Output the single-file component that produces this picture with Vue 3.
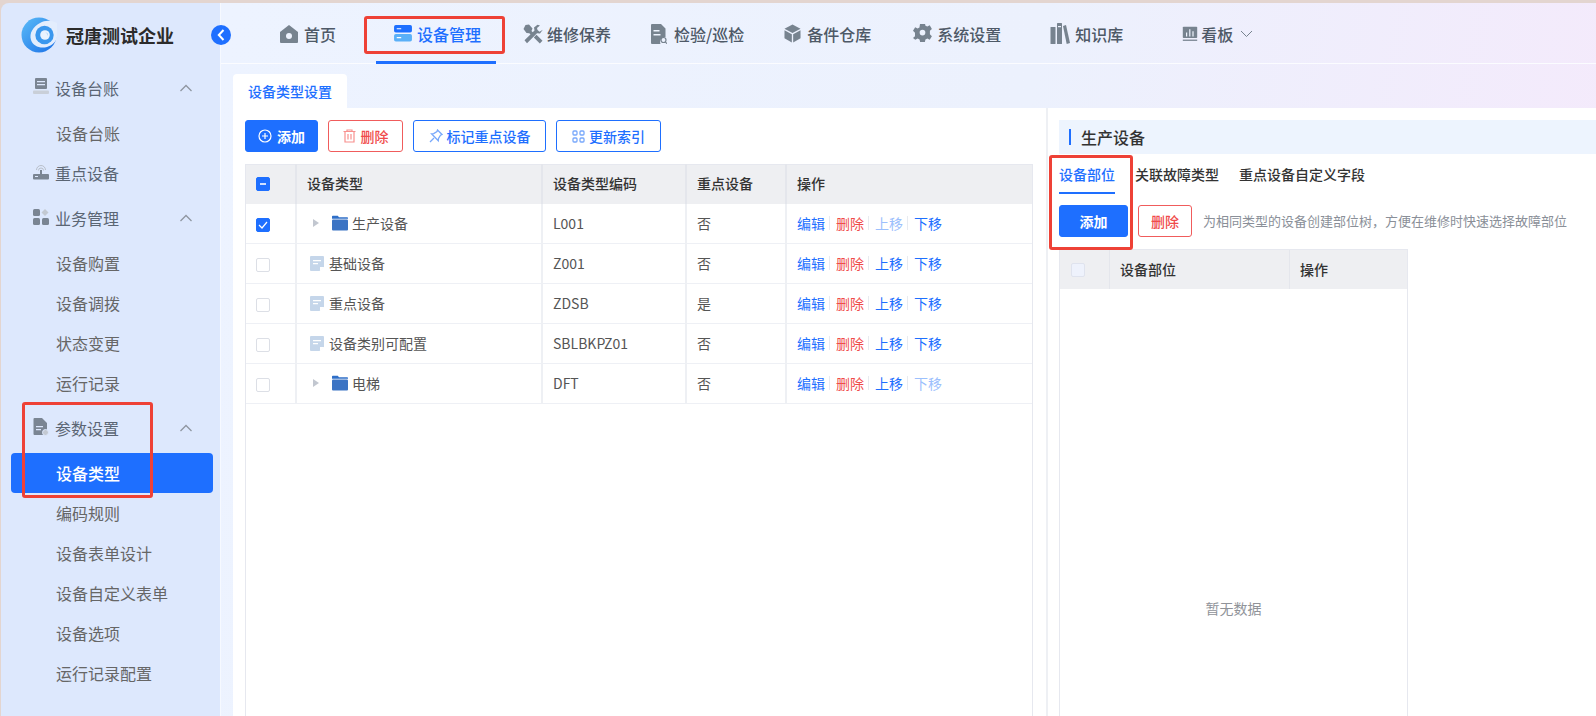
<script setup>
const navItems = [
  { key: 'home', label: '首页', ml: 59, gap: 6, w: 18, h: 18, vb: '1 1.5 18 18' },
  { key: 'server', label: '设备管理', ml: 40, gap: 5, w: 18, h: 17, vb: '0 1 20 19' },
  { key: 'tools', label: '维修保养', ml: 27, gap: 4, w: 20, h: 20, vb: '0 0 20 20' },
  { key: 'doc', label: '检验/巡检', ml: 40, gap: 7, w: 16, h: 20, vb: '0 0 16 20' },
  { key: 'box', label: '备件仓库', ml: 40, gap: 6, w: 17, h: 19, vb: '1 1 18 19' },
  { key: 'gear', label: '系统设置', ml: 42, gap: 5, w: 19, h: 19, vb: '0 0 20 20' },
  { key: 'books', label: '知识库', ml: 49, gap: 5, w: 20, h: 21, vb: '0 0 20 21' },
  { key: 'chart', label: '看板', ml: 59, gap: 3, w: 16, h: 16, vb: '0 0 20 20', chevron: true }
]
navItems[1].active = true
const rows = [
  { name: '生产设备', code: 'L001', key: '否', folder: true, checked: true, upOff: true },
  { name: '基础设备', code: 'Z001', key: '否' },
  { name: '重点设备', code: 'ZDSB', key: '是' },
  { name: '设备类别可配置', code: 'SBLBKPZ01', key: '否' },
  { name: '电梯', code: 'DFT', key: '否', folder: true, downOff: true }
]
</script>

<template>
  <div class="app">
    <div class="strip"></div>
    <div class="body">
      <aside class="side">
        <div class="brand">
          <svg class="logo" width="36" height="36" viewBox="0 0 36 36">
            <defs>
              <linearGradient id="lg" x1="0" y1="0" x2="1" y2="1">
                <stop offset="0" stop-color="#5bbcf8" />
                <stop offset="1" stop-color="#1a6fe6" />
              </linearGradient>
            </defs>
            <circle cx="18" cy="18" r="17.5" fill="url(#lg)" />
            <path d="M36 6 C30 3 24 3 19 6 C12 10 8 16 10 23 C12 29 19 32 26 30 C31 28.500 35 25 36 20 Z" fill="#e3edfd" />
            <circle cx="23.500" cy="18" r="9.200" fill="#3a97ee" />
            <circle cx="24" cy="18" r="4.800" fill="#e9f2fe" />
            <path d="M24 15.500a2.800 2.800 0 0 1 2.500 3.800 2.500 2.500 0 0 0-2.500-3.800z" fill="#5aaef2" />
          </svg>
          <span class="brand-name">冠唐测试企业</span>
        </div>

        <div class="group first">
          <svg class="gicon" width="16" height="18" viewBox="0 0 16 18"><rect x="2" y="0" width="12" height="11" rx="1" fill="#7a8593" /><path d="M4 3h8v1.200H4zM4 6h8v1.200H4z" fill="#dde8fd" /><rect x="0" y="12.500" width="16" height="3.500" rx="1" fill="#c9cfd8" /></svg>
          <span class="gtext">设备台账</span>
          <svg class="chev" width="14" height="8" viewBox="0 0 14 8"><path d="M1.500 7 7 1.500 12.500 7" fill="none" stroke="#8f96a0" stroke-width="1.300" /></svg>
        </div>
        <div class="sub sub-tight">设备台账</div>
        <div class="group plain">
          <svg class="gicon" width="16" height="16" viewBox="0 0 16 16"><path d="M3.500 6a4.500 4.500 0 0 1 9 0M5.500 6.500a2.500 2.500 0 0 1 5 0" fill="none" stroke="#b9c0ca" stroke-width="1" /><rect x="7" y="6" width="2" height="5" fill="#7a8593" /><rect x="0" y="10" width="16" height="5.500" rx="1" fill="#7a8593" /><rect x="2" y="12" width="3" height="1" fill="#dde8fd" /></svg>
          <span class="gtext">重点设备</span>
        </div>
        <div class="group tight">
          <svg class="gicon" width="16" height="16" viewBox="0 0 16 16"><rect x="0" y="0" width="7" height="7" rx="1.500" fill="#7a8593" /><path d="M12 0l3.500 3.500L12 7 8.500 3.500z" fill="#c3c9d2" /><rect x="0" y="9" width="7" height="7" rx="1.500" fill="#7a8593" /><rect x="9" y="9" width="7" height="7" rx="1.500" fill="#7a8593" /></svg>
          <span class="gtext">业务管理</span>
          <svg class="chev" width="14" height="8" viewBox="0 0 14 8"><path d="M1.500 7 7 1.500 12.500 7" fill="none" stroke="#8f96a0" stroke-width="1.300" /></svg>
        </div>
        <div class="sub sub-first">设备购置</div>
        <div class="sub">设备调拨</div>
        <div class="sub">状态变更</div>
        <div class="sub">运行记录</div>
        <div class="group wide">
          <svg class="gicon" width="16" height="18" viewBox="0 0 16 18"><path d="M1.500 0H9l5 5v11a1 1 0 0 1-1 1H1.500a1 1 0 0 1-1-1V1a1 1 0 0 1 1-1z" fill="#7a8593" /><path d="M3 8h7v1.200H3zM3 11h5v1.200H3z" fill="#dde8fd" /><circle cx="12.500" cy="14.500" r="3" fill="#c3c9d2" stroke="#dde8fd" /></svg>
          <span class="gtext">参数设置</span>
          <svg class="chev" width="14" height="8" viewBox="0 0 14 8"><path d="M1.500 7 7 1.500 12.500 7" fill="none" stroke="#8f96a0" stroke-width="1.300" /></svg>
        </div>
        <div class="sub active">设备类型</div>
        <div class="sub">编码规则</div>
        <div class="sub">设备表单设计</div>
        <div class="sub">设备自定义表单</div>
        <div class="sub">设备选项</div>
        <div class="sub">运行记录配置</div>
      </aside>

      <button class="collapse" aria-label="收起">
        <svg width="8" height="12" viewBox="0 0 8 12"><path d="M6.500 1 1.800 6l4.700 5" fill="none" stroke="#fff" stroke-width="2" /></svg>
      </button>

      <main class="main">
        <nav class="topnav">
          <div
            v-for="n in navItems"
            :key="n.key"
            class="nav-item"
            :class="{ on: n.active }"
            :style="{ marginLeft: n.ml + 'px', gap: n.gap + 'px' }"
          >
            <svg :width="n.w" :height="n.h" :viewBox="n.vb" class="nav-ic">
              <template v-if="n.key === 'home'">
                <path d="M10 1.500 19 8.500V18.500a1 1 0 0 1-1 1H2a1 1 0 0 1-1-1V8.500z" fill="#77838f" /><circle cx="10" cy="12.500" r="3" fill="#eef3fe" />
              </template>
              <template v-else-if="n.key === 'server'">
                <rect x="0" y="1" width="20" height="8.500" rx="2" fill="#1e6fff" /><rect x="0" y="11" width="20" height="8.500" rx="2" fill="#5ab0f8" />
                <path d="M3 4.500h5v1.200H3zM3 14.500h5v1.200H3z" fill="#fff" />
              </template>
              <template v-else-if="n.key === 'tools'">
                <path d="M2.500 1 6 0.500 9.500 4.500 8.500 7 12 10.500 9.800 12.700 6.300 9.200 3.500 9 .5 5z" fill="#77838f" />
                <path d="M14.500 .8 11 3.500 11.500 6.500 1.500 16.300 4 19.200 14 9.200 17 9.500 19.800 5.800 16.500 7.800 14.500 6 14 4 17 1.500z" fill="#77838f" />
                <path d="M10.800 13.500 13.500 10.800 19.500 16.800 16.800 19.500z" fill="#77838f" />
              </template>
              <template v-else-if="n.key === 'doc'">
                <path d="M1 0h9l4.500 4.500v8.500a5 5 0 0 0-5 7H1a1 1 0 0 1-1-1V1a1 1 0 0 1 1-1z" fill="#77838f" />
                <path d="M2.500 6h6v1.400h-6zM2.500 10h7v1.400h-7z" fill="#eef3fe" />
                <circle cx="12.500" cy="16" r="2.500" fill="none" stroke="#77838f" stroke-width="1.200" /><path d="M14.300 17.800 16 19.700" stroke="#77838f" stroke-width="1.200" />
              </template>
              <template v-else-if="n.key === 'box'">
                <path d="M10 1 18.500 5.500 10 10 1.500 5.500z" fill="#77838f" /><path d="M1.500 7 9.300 11.200V20L1.500 15.500z" fill="#77838f" /><path d="M18.500 7 10.700 11.200V20L18.500 15.500z" fill="#77838f" />
              </template>
              <template v-else-if="n.key === 'gear'">
                <path fill-rule="evenodd" d="M7.500 0h5l.6 2.800 2 .9 2.500-1.400 2.300 3.900-2.100 2v3.600l2.100 2-2.300 3.900-2.500-1.400-2 .9-.6 2.800h-5l-.6-2.800-2-.9-2.500 1.400L0 15.800l2.100-2v-3.600L0 8.200l2.300-3.900 2.500 1.400 2-.9zM10 7a3 3 0 1 0 0 6 3 3 0 0 0 0-6z" fill="#77838f" transform="translate(0 -1)" />
              </template>
              <template v-else-if="n.key === 'books'">
                <rect x="0.500" y="4" width="5" height="17" rx=".5" fill="#77838f" /><rect x="7" y="0" width="5" height="21" rx=".5" fill="#77838f" /><path d="M13 3 16 2 20 20 16.700 21z" fill="#77838f" /><path d="M8 3h3v1.200H8z" fill="#eef3fe" />
              </template>
              <template v-else-if="n.key === 'chart'">
                <rect x="1" y="1" width="18" height="14" rx="1" fill="#77838f" /><path d="M5 8h1.500v5H5zM9 4h1.500v9H9zM13 6.500h1.500V13H13z" fill="#eef3fe" /><rect x="1" y="17" width="18" height="1.600" fill="#77838f" />
              </template>
            </svg>
            <span class="nav-t">{{ n.label }}</span>
            <svg v-if="n.chevron" class="nav-chev" width="13" height="8" viewBox="0 0 13 8"><path d="M1 1l5.500 5.500L12 1" fill="none" stroke="#77838f" stroke-width="1" /></svg>
          </div>
        </nav>

        <div class="tabs"><div class="tab">设备类型设置</div></div>

        <section class="panel">
          <div class="left">
            <div class="toolbar">
              <button class="btn primary w-add">
                <svg width="14" height="14" viewBox="0 0 14 14"><circle cx="7" cy="7" r="6" fill="none" stroke="#fff" stroke-width="1.200" /><path d="M4 7h6M7 4v6" stroke="#fff" stroke-width="1.200" /></svg>
                添加
              </button>
              <button class="btn danger w-del">
                <svg width="13" height="14" viewBox="0 0 13 14"><path d="M0.500 2.500h12M4 2.500V1h5v1.500M2 2.500V13h9V2.500M5 5v5.500M8 5v5.500" fill="none" stroke="#f8908e" stroke-width="1.200" /></svg>
                删除
              </button>
              <button class="btn ghost w-mark">
                <svg width="14" height="14" viewBox="0 0 14 14"><path d="M8.500 1 13 5.500 11.500 6.200 9.500 9.500 9.300 11.700 2.500 4.800 4.700 4.600 8 2.500zM5 9 1 13" fill="none" stroke="#78a8fb" stroke-width="1.300" /></svg>
                标记重点设备
              </button>
              <button class="btn ghost w-upd">
                <svg width="13" height="13" viewBox="0 0 13 13"><g fill="none" stroke="#78a8fb" stroke-width="1.300"><rect x="1" y="1" width="4" height="4" rx="1" /><rect x="8" y="1" width="4" height="4" rx="1" /><rect x="1" y="8" width="4" height="4" rx="1" /><rect x="8" y="8" width="4" height="4" rx="1" /></g></svg>
                更新索引
              </button>
            </div>

            <div class="twrap">
              <table class="tbl">
                <colgroup><col class="c1" /><col class="c2" /><col class="c3" /><col class="c4" /><col /></colgroup>
                <thead>
                  <tr>
                    <th class="cc"><span class="ck on"><i class="dash"></i></span></th>
                    <th>设备类型</th><th>设备类型编码</th><th>重点设备</th><th>操作</th>
                  </tr>
                </thead>
                <tbody>
                  <tr v-for="r in rows" :key="r.code">
                    <td class="cc">
                      <span class="ck" :class="{ on: r.checked }">
                        <svg v-if="r.checked" width="10" height="8" viewBox="0 0 10 8"><path d="M1 4l3 3 5-6" fill="none" stroke="#fff" stroke-width="1.200" /></svg>
                      </span>
                    </td>
                    <td>
                      <div v-if="r.folder" class="nm folder">
                        <svg width="6" height="8" viewBox="0 0 6 8"><path d="M0 0l6 4-6 4z" fill="#c2c7d0" /></svg>
                        <svg class="fd" width="16" height="16" viewBox="0 0 16 16"><path d="M0 1.500A.8.800 0 0 1 .8.700h5l1.200 1.500h8.200a.8.800 0 0 1 .8.800v.7H0z" fill="#2f6fc8" /><rect x="0" y="4.500" width="16" height="11" rx="1" fill="#3c74c4" /></svg>
                        <span>{{ r.name }}</span>
                      </div>
                      <div v-else class="nm leaf">
                        <svg width="14" height="15" viewBox="0 0 14 15"><path d="M1 0h12a1 1 0 0 1 1 1v9.500L9.500 15H1a1 1 0 0 1-1-1V1a1 1 0 0 1 1-1z" fill="#c5d6ea" /><path d="M3 4h8v1.200H3zM3 7h5v1.200H3z" fill="#fff" /><path d="M10 11h4l-4 4z" fill="#fff" /></svg>
                        <span>{{ r.name }}</span>
                      </div>
                    </td>
                    <td>{{ r.code }}</td>
                    <td>{{ r.key }}</td>
                    <td>
                      <div class="ops">
                        <a class="lnk">编辑</a><i class="sep"></i>
                        <a class="lnk red">删除</a><i class="sep"></i>
                        <a class="lnk" :class="{ off: r.upOff }">上移</a><i class="sep"></i>
                        <a class="lnk" :class="{ off: r.downOff }">下移</a>
                      </div>
                    </td>
                  </tr>
                </tbody>
              </table>
            </div>
          </div>

          <div class="right">
            <div class="title"><i class="bar"></i>生产设备</div>
            <div class="rtabs">
              <span class="rtab on">设备部位</span>
              <span class="rtab t2">关联故障类型</span>
              <span class="rtab t3">重点设备自定义字段</span>
            </div>
            <div class="rbar">
              <button class="btn primary w-radd">添加</button>
              <button class="btn danger w-rdel">删除</button>
              <span class="hint">为相同类型的设备创建部位树，方便在维修时快速选择故障部位</span>
            </div>
            <div class="rtable">
              <div class="rhead">
                <div class="rc1"><span class="ck muted"></span></div>
                <div class="rc2">设备部位</div>
                <div class="rc3">操作</div>
              </div>
              <div class="empty">暂无数据</div>
            </div>
          </div>
        </section>
      </main>
    </div>

    <div class="mark m1"></div>
    <div class="mark m2"></div>
    <div class="mark m3"></div>
  </div>
</template>

<style scoped>
.app {
  position: relative;
  width: 1596px;
  height: 716px;
  overflow: hidden;
  display: flex;
  flex-direction: column;
  background: #e3d5d0;
  font-family: "Noto Sans CJK SC", "Noto Sans", sans-serif;
  font-size: 14px;
  color: #555;
}
.strip { height: 3px; flex: none; }
.body { position: relative; flex: 1; display: flex; min-height: 0; padding-left: 1px; }

.side {
  width: 220px;
  box-sizing: border-box;
  flex: none;
  background: #dde8fd;
  border-top-left-radius: 8px;
  border-right: 1px solid #f6f9ff;
  padding: 0 7px 0 10px;
  color: #5e6875;
}
.brand { display: flex; align-items: center; height: 65px; padding-left: 10px; }
.logo { flex: none; margin-top: -2px; }
.brand-name { margin-left: 9px; font-size: 18px; font-weight: 700; color: #2b2b2b; margin-top: -2px; }

.group { display: flex; align-items: center; height: 40px; padding-left: 22px; font-size: 16px; color: #5a6573; }
.group.tight { margin-top: 5px; }
.group.wide { margin-top: 5px; }
.gicon { flex: none; width: 16px; margin-top: -3px; }
.gtext { margin-left: 6px; line-height: 1; }
.chev { margin-left: 60px; }
.sub { height: 40px; line-height: 40px; padding-left: 45px; font-size: 16px; color: #666; }
.sub-tight { margin-top: 5px; }
.sub-first { margin-top: 5px; }
.sub.active { background: #1e6fff; color: #fff; font-weight: 500; border-radius: 4px; margin-top: 5px; }

.collapse {
  position: absolute;
  left: 211px;
  top: 22px;
  width: 20px;
  height: 20px;
  padding: 0;
  border: 0;
  border-radius: 50%;
  background: #1e6fff;
  display: flex;
  align-items: center;
  justify-content: center;
  z-index: 2;
}

.main {
  flex: 1;
  min-width: 0;
  display: flex;
  flex-direction: column;
  background: linear-gradient(100deg, #edf3ff 0%, #ecf1fd 55%, #f5e9fb 100%);
}
.topnav { height: 60px; flex: none; display: flex; border-bottom: 1px solid #fbfcff; }
.nav-item {
  position: relative;
  display: flex;
  align-items: center;
  height: 60px;
  padding-top: 1px;
  box-sizing: border-box;
  font-size: 16px;
  font-weight: 500;
  color: #4e5967;
}
.nav-t { line-height: 1; }
.nav-chev { margin-left: 4px; margin-top: 1px; }
.nav-item.on { padding: 1px 15px 0 18px; color: #1e6fff; }
.nav-item.on::after { content: ""; position: absolute; left: 0; right: 0; bottom: -1px; height: 3px; background: #1e6fff; }

.tabs { height: 44px; flex: none; display: flex; align-items: flex-end; padding-left: 12px; }
.tab {
  width: 114px;
  height: 34px;
  line-height: 34px;
  text-align: center;
  background: #fff;
  border-radius: 4px 4px 0 0;
  color: #1e6fff;
  font-weight: 500;
}

.panel { flex: 1; min-height: 0; margin-left: 12px; background: #fff; display: flex; }
.left {
  width: 815px;
  box-sizing: border-box;
  flex: none;
  padding: 12px 13px 0 12px;
  border-right: 2px solid #eef0f4;
  display: flex;
  flex-direction: column;
}
.toolbar { display: flex; gap: 10px; height: 32px; flex: none; }
.btn {
  height: 32px;
  padding: 0;
  box-sizing: border-box;
  border-radius: 3px;
  display: inline-flex;
  align-items: center;
  justify-content: center;
  gap: 5px;
  font-family: inherit;
  font-size: 14px;
  font-weight: 500;
  background: #fff;
}
.primary { background: #1e6fff; border: 1px solid #1e6fff; color: #fff; font-weight: 700; }
.danger { border: 1px solid #f05c5c; color: #f04b4b; }
.ghost { border: 1px solid #1e6fff; color: #1e6fff; gap: 4px; }
.w-add { width: 73px; }
.w-del { width: 75px; }
.w-mark { width: 133px; }
.w-upd { width: 105px; }

.twrap {
  margin-top: 12px;
  flex: 1;
  border-left: 1px solid #e6e8ef;
  border-right: 1px solid #e6e8ef;
}
.tbl { width: 100%; border-collapse: collapse; table-layout: fixed; }
.c1 { width: 50px; }
.c2 { width: 246px; }
.c3 { width: 144px; }
.c4 { width: 100px; }
.tbl th, .tbl td {
  box-sizing: border-box;
  text-align: left;
  font-size: 14px;
  border-right: 2px solid #eef0f4;
}
.tbl th { height: 39px; padding: 0 11px 2px 10px; }
.tbl td { height: 40px; padding: 0 11px 1px 10px; }
.tbl th:last-child, .tbl td:last-child { border-right: 0; }
.tbl th { background: #eeeff2; color: #333; font-weight: 500; border-top: 1px solid #e6e8ef; border-right-color: #e4e6ec; }
.tbl td { border-bottom: 1px solid #eef0f5; color: #555; }
.tbl th.cc { padding: 0 0 0 10px; }
.tbl td.cc { padding: 3px 0 0 10px; }
.ck {
  display: flex;
  align-items: center;
  justify-content: center;
  width: 14px;
  height: 14px;
  box-sizing: border-box;
  border: 1px solid #dcdfe6;
  border-radius: 2px;
  background: #fff;
}
.ck.on { background: #1e6fff; border-color: #1e6fff; }
.ck.muted { background: #eef2fc; border-color: #dfe3ee; }
.dash { width: 6px; height: 2px; background: #cfe0ff; }
.nm { display: flex; align-items: center; }
.nm.folder { padding-left: 6px; }
.nm.folder .fd { margin-left: 13px; margin-right: 4px; }
.nm.leaf { padding-left: 3px; gap: 5px; }
.ops { display: flex; align-items: center; }
.lnk { color: #1e6fff; }
.lnk.red { color: #f04b4b; }
.lnk.off { color: #9cc0fd; }
.sep { width: 1px; height: 14px; background: #e8ebf0; margin: 0 6px 0 4px; }

.right { flex: 1; min-width: 0; padding: 12px 0 0 11px; display: flex; flex-direction: column; }
.title {
  height: 34px;
  flex: none;
  display: flex;
  align-items: center;
  background: #edf4fe;
  font-size: 16px;
  font-weight: 500;
  color: #333;
  padding-left: 10px;
}
.bar { width: 2px; height: 16px; background: #1e6fff; margin-right: 10px; }
.rtabs { display: flex; height: 40px; flex: none; align-items: flex-start; font-weight: 500; color: #333; }
.rtab { height: 40px; line-height: 40px; box-sizing: border-box; }
.rtab.on { color: #1e6fff; border-bottom: 2px solid #1e6fff; width: 56px; }
.t2 { margin-left: 20px; }
.t3 { margin-left: 20px; }
.rbar { margin-top: 11px; height: 32px; flex: none; display: flex; align-items: center; }
.w-radd { width: 69px; }
.w-rdel { width: 54px; margin-left: 10px; }
.hint { margin-left: 11px; padding-bottom: 2px; color: #8a8f98; font-size: 13px; white-space: nowrap; }
.rtable {
  width: 349px;
  box-sizing: border-box;
  margin-top: 12px;
  flex: 1;
  display: flex;
  flex-direction: column;
  border-left: 1px solid #e6e8ef;
  border-right: 1px solid #e6e8ef;
}
.rhead {
  height: 40px;
  box-sizing: border-box;
  flex: none;
  display: flex;
  align-items: center;
  background: #eeeff2;
  color: #333;
  font-weight: 500;
  border-top: 1px solid #e6e8ef;
}
.rc1 { width: 50px; height: 100%; box-sizing: border-box; display: flex; align-items: center; padding-left: 11px; border-right: 1px solid #e4e6ec; }
.rc2 { width: 180px; height: 100%; box-sizing: border-box; display: flex; align-items: center; padding: 0 0 2px 10px; border-right: 1px solid #e4e6ec; }
.rc3 { padding: 0 0 2px 10px; }
.empty { text-align: center; color: #909399; line-height: 22px; padding-top: 308px; }

.mark { position: absolute; box-sizing: border-box; border: 3px solid #ee4136; border-radius: 3px; z-index: 3; pointer-events: none; }
.m1 { left: 364px; top: 16px; width: 141px; height: 38px; }
.m2 { left: 22px; top: 402px; width: 131px; height: 96px; }
.m3 { left: 1049px; top: 155px; width: 84px; height: 95px; }
</style>
